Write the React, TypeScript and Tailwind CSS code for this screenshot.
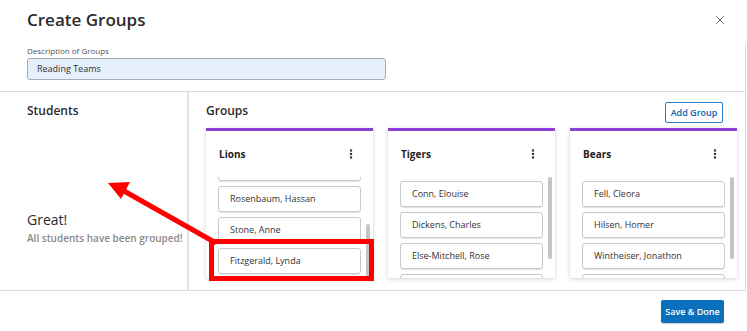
import React from "react";
import { X, MoreVertical } from "lucide-react";

interface Group {
  name: string;
  students: string[];
  offset: number; // how far the list is scrolled
  thumbTop: number;
  thumbHeight: number;
}

// empty strings are items scrolled out of view, only their edge shows
const groups: Group[] = [
  {
    name: "Lions",
    students: ["", "Rosenbaum, Hassan", "Stone, Anne", "Fitzgerald, Lynda"],
    offset: 26,
    thumbTop: 47,
    thumbHeight: 56,
  },
  {
    name: "Tigers",
    students: ["Conn, Elouise", "Dickens, Charles", "Else-Mitchell, Rose", ""],
    offset: 0,
    thumbTop: 0,
    thumbHeight: 82,
  },
  {
    name: "Bears",
    students: ["Fell, Cleora", "Hilsen, Homer", "Wintheiser, Jonathon", ""],
    offset: 0,
    thumbTop: 0,
    thumbHeight: 82,
  },
];

function GroupCard({ group }: { group: Group }) {
  return (
    <div className="w-[167px] h-[150px] bg-white border-t-[3px] border-[#8d3fd3] shadow-[0_1px_4px_rgba(0,0,0,0.18)] flex flex-col">
      <div className="flex items-center justify-between pl-[13px] pr-[16px] h-[46px]">
        <span className="text-[10px] font-bold text-[#222]">{group.name}</span>
        <MoreVertical size={12} strokeWidth={3} className="text-[#333]" />
      </div>
      <div className="flex flex-1 overflow-hidden pl-[12px] pr-[3px]">
        <div className="flex-1 overflow-hidden pt-[4px]">
          <div className="flex flex-col gap-[5px]" style={{ marginTop: -group.offset }}>
            {group.students.map((s, i) => (
              <div
                key={i}
                className="h-[26px] shrink-0 flex items-center pl-[11px] border border-[#c9c9c9] rounded-[3px] shadow-[0_1px_1px_rgba(0,0,0,0.12)] text-[9px] text-[#333]"
              >
                {s}
              </div>
            ))}
          </div>
        </div>
        <div className="w-[4px] ml-[5px] relative">
          <div
            className="absolute left-0 w-[4px] rounded-full bg-[#c4c4c4]"
            style={{ top: group.thumbTop, height: group.thumbHeight }}
          />
        </div>
      </div>
    </div>
  );
}

export default function App() {
  return (
    <div className="w-[747px] h-[331px] bg-white relative overflow-hidden text-[#333] font-['Open_Sans',sans-serif]">
      <div className="flex items-start justify-between pl-[27px] pr-[20px] pt-[8px] h-[44px]">
        <h1 className="text-[17px] font-semibold text-[#2b2b2b] leading-[24px]">Create Groups</h1>
        <X size={14} strokeWidth={1.5} className="mt-[5px] text-[#555]" />
      </div>

      <div className="w-[746px] border-r border-[#ddd] flex flex-col">
        <div className="pl-[27px] h-[47px]">
          <div className="text-[8px] text-[#555] leading-[12px] mt-[1px]">Description of Groups</div>
          <div className="w-[359px] h-[22px] mt-[1px] bg-[#e6f0fc] border border-[#a9adb2] rounded-[3px] flex items-center pl-[9px] text-[9px] text-[#333]">
            Reading Teams
          </div>
        </div>

        <div className="flex h-[200px] border-t border-b border-[#dcdcdc]">
          <div className="w-[189px] border-r-2 border-[#e2e2e2] pl-[27px] pt-[10px] flex flex-col">
            <div className="text-[12px] font-semibold text-[#2b2b2b]">Students</div>
            <div className="mt-[91px] text-[14px] font-medium text-[#2b2b2b] leading-[18px]">Great!</div>
            <div className="text-[10px] font-semibold text-[#8a8a8a] leading-[14px] mt-[2px]">
              All students have been grouped!
            </div>
          </div>

          <div className="flex-1 pl-[17px] pt-[10px] flex flex-col">
            <div className="flex items-start justify-between pr-[22px] h-[26px]">
              <div className="text-[12px] font-semibold text-[#2b2b2b]">Groups</div>
              <button className="h-[21px] w-[58px] border border-[#2a7fc4] rounded-[2px] text-[9px] font-semibold text-[#0b63ad]">
                Add Group
              </button>
            </div>
            <div className="flex gap-[15px]">
              {groups.map((g) => (
                <GroupCard key={g.name} group={g} />
              ))}
            </div>
          </div>
        </div>
      </div>

      <div className="flex justify-end pr-[23px] pt-[9px]">
        <button className="h-[23px] w-[63px] bg-[#0a6fbd] rounded-[2px] text-[9px] font-semibold text-white shadow-[0_1px_1px_rgba(0,0,0,0.2)]">
          Save &amp; Done
        </button>
      </div>

      {/* annotation: highlight box + arrow */}
      <div className="absolute left-[209px] top-[239px] w-[165px] h-[42px] border-[5px] border-[#ff0000]" />
      <svg className="absolute left-0 top-0" width="747" height="331">
        <line x1="216" y1="243" x2="124" y2="191" stroke="#ff0000" strokeWidth="5" />
        <polygon points="108,183 130,182 121,199" fill="#ff0000" />
      </svg>
    </div>
  );
}
